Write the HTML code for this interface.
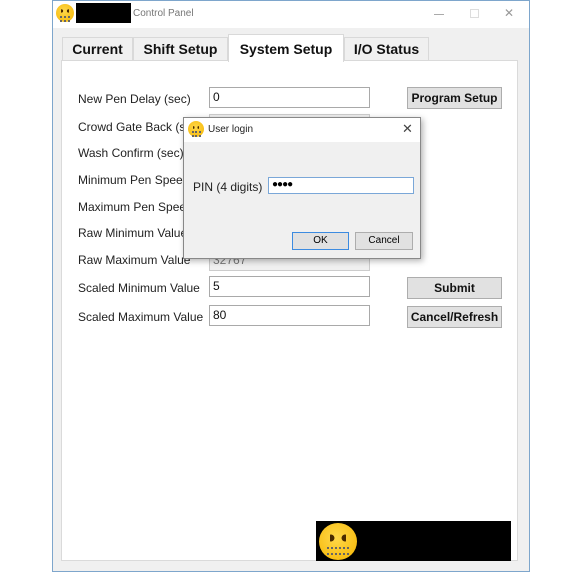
<!DOCTYPE html><html><head><style>
*{margin:0;padding:0;box-sizing:border-box}
body{width:576px;height:576px;background:#fff;position:relative;font-family:"Liberation Sans",sans-serif;overflow:hidden}
.a{position:absolute}
.lbl{position:absolute;left:78px;font-size:12px;color:#222;line-height:14px}
.tb{position:absolute;left:209px;width:161px;height:21px;border:1px solid #a9a9a9;background:#fff;font-size:12px;padding:2px 3px;color:#111}
.btn{position:absolute;left:407px;width:95px;height:22px;background:#e1e1e1;border:1px solid #adadad;font-size:12px;font-weight:bold;text-align:center;line-height:20px;color:#111}
.tab{position:absolute;top:37px;height:24px;background:#f0f0f0;border:1px solid #d9d9d9;font-size:14px;font-weight:bold;line-height:22px;text-align:center;color:#111}
.emo{position:absolute;border-radius:50%;background:radial-gradient(circle at 45% 40%,#ffd84a,#f5b400)}
.emo::before{content:"";position:absolute;left:30%;top:30%;width:40%;height:22%;background:radial-gradient(circle at 12% 50%,#4a2a00 40%,transparent 45%) left/50% 100% no-repeat,radial-gradient(circle at 88% 50%,#4a2a00 40%,transparent 45%) right/50% 100% no-repeat}
.emo::after{content:"";position:absolute;left:22%;top:64%;width:58%;height:12%;border-top:2px dotted #666;border-bottom:2px dotted #666}
</style></head><body>
<div class="a" style="left:52px;top:0;width:478px;height:572px;border:1px solid #7ea6cc;background:#f0f0f0"></div>
<div class="a" style="left:53px;top:1px;width:476px;height:27px;background:#fff"></div>
<div class="emo" style="left:56px;top:4px;width:18px;height:18px"></div>
<div class="a" style="left:76px;top:3px;width:55px;height:20px;background:#000"></div>
<div class="a" style="left:133px;top:8px;font-size:10px;color:#777">Control Panel</div>
<div class="a" style="left:434px;top:14px;width:10px;height:1px;background:#aaa"></div>
<div class="a" style="left:470px;top:9px;width:9px;height:9px;border:1px solid #ddd"></div>
<div class="a" style="left:504px;top:6px;font-size:12px;color:#999">✕</div>
<div class="a" style="left:61px;top:60px;width:457px;height:501px;background:#fff;border:1px solid #dadada"></div>
<div class="tab" style="left:62px;width:71px">Current</div>
<div class="tab" style="left:133px;width:95px">Shift Setup</div>
<div class="tab" style="left:228px;top:34px;height:28px;width:116px;background:#fff;border-bottom:none;line-height:28px">System Setup</div>
<div class="tab" style="left:344px;width:85px">I/O Status</div>
<div class="lbl" style="top:92px">New Pen Delay (sec)</div>
<div class="lbl" style="top:120px">Crowd Gate Back (sec)</div>
<div class="lbl" style="top:146px">Wash Confirm (sec)</div>
<div class="lbl" style="top:173px">Minimum Pen Speed</div>
<div class="lbl" style="top:200px">Maximum Pen Speed</div>
<div class="lbl" style="top:226px">Raw Minimum Value</div>
<div class="lbl" style="top:253px">Raw Maximum Value</div>
<div class="lbl" style="top:281px">Scaled Minimum Value</div>
<div class="lbl" style="top:310px">Scaled Maximum Value</div>
<div class="tb" style="top:87px">0</div>
<div class="tb" style="top:114px;background:#f0f0f0;border-color:#ccc"></div>
<div class="tb" style="top:250px;background:#f0f0f0;border-color:#ccc;color:#777">32767</div>
<div class="tb" style="top:276px">5</div>
<div class="tb" style="top:305px">80</div>
<div class="btn" style="top:87px">Program Setup</div>
<div class="btn" style="top:277px">Submit</div>
<div class="btn" style="top:306px">Cancel/Refresh</div>
<div class="a" style="left:183px;top:117px;width:238px;height:142px;background:#f0f0f0;border:1px solid #888;box-shadow:2px 2px 6px rgba(0,0,0,.3)"></div>
<div class="a" style="left:184px;top:118px;width:236px;height:24px;background:#fff"></div>
<div class="emo" style="left:188px;top:121px;width:16px;height:16px"></div>
<div class="a" style="left:208px;top:124px;font-size:10px;color:#222">User login</div>
<div class="a" style="left:402px;top:121px;font-size:13px;color:#444">✕</div>
<div class="a" style="left:193px;top:180px;font-size:12px;color:#222">PIN (4 digits)</div>
<div class="a" style="left:268px;top:177px;width:146px;height:17px;background:#fff;border:1px solid #7aa7d8;font-size:10px;padding-left:3px;line-height:14px;letter-spacing:-1px">●●●●</div>
<div class="a" style="left:292px;top:232px;width:57px;height:18px;background:#e1e1e1;border:1px solid #3c8be0;font-size:10px;text-align:center;line-height:16px">OK</div>
<div class="a" style="left:355px;top:232px;width:58px;height:18px;background:#e1e1e1;border:1px solid #adadad;font-size:10px;text-align:center;line-height:16px">Cancel</div>
<div class="a" style="left:316px;top:521px;width:195px;height:40px;background:#000"></div>
<div class="emo" style="left:319px;top:523px;width:38px;height:37px"></div>
</body></html>
